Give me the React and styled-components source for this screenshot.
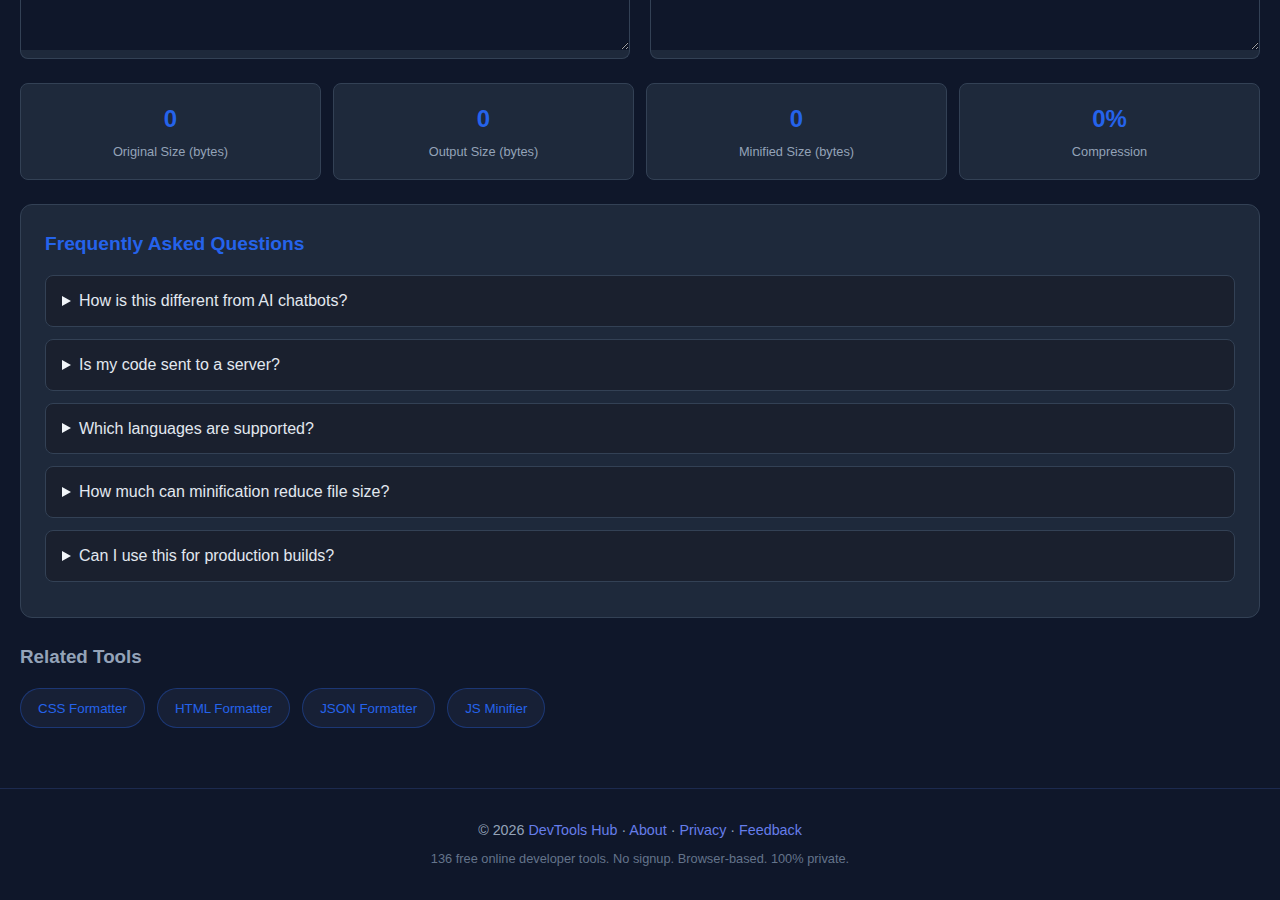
import React from "react";
import styled, { createGlobalStyle } from "styled-components";

const Global = createGlobalStyle`
  html, body { margin: 0; padding: 0; background: #0f172a; }
  body { font-family: "Liberation Sans", Arial, sans-serif; color: #e2e8f0; }
  * { box-sizing: border-box; }
`;

const Main = styled.main`
  padding: 0 20px;
`;

const EditorRow = styled.div`
  display: grid;
  grid-template-columns: 1fr 1fr;
  gap: 20px;
`;

const EditorPanel = styled.div`
  background: #1e293b;
  border: 1px solid #334155;
  border-top: none;
  border-radius: 0 0 8px 8px;
  overflow: hidden;
  padding-bottom: 8px;
`;

const CodeArea = styled.textarea`
  display: block;
  width: 100%;
  height: 50px;
  background: #0f172a;
  border: none;
  outline: none;
  color: #e2e8f0;
  resize: vertical;
  font-family: "Liberation Mono", monospace;
`;

const Stats = styled.div`
  display: grid;
  grid-template-columns: repeat(4, 1fr);
  gap: 12px;
  margin-top: 24px;
`;

const StatCard = styled.div`
  background: #1e293b;
  border: 1px solid #334155;
  border-radius: 8px;
  padding: 20px 12px 19px;
  text-align: center;
`;

const StatValue = styled.div`
  color: #2563eb;
  font-size: 24px;
  font-weight: 700;
  line-height: 29px;
`;

const StatLabel = styled.div`
  color: #94a3b8;
  font-size: 12.8px;
  line-height: 16px;
  margin-top: 11px;
`;

const FaqSection = styled.section`
  margin-top: 24px;
  background: #1e293b;
  border: 1px solid #334155;
  border-radius: 12px;
  padding: 26px 24px 23px;
`;

const FaqTitle = styled.h2`
  margin: 0 0 18px;
  color: #2563eb;
  font-size: 19.2px;
  line-height: 26px;
  font-weight: 700;
`;

const FaqItem = styled.details`
  background: #1a202e;
  border: 1px solid #334155;
  border-radius: 8px;
  margin-bottom: 12px;
`;

const FaqQuestion = styled.summary`
  padding: 16px;
  font-size: 16px;
  line-height: 17.75px;
  color: #e2e8f0;
  cursor: pointer;
  list-style: none;
  display: flex;
  align-items: center;
  gap: 8px;
  &::-webkit-details-marker { display: none; }
`;

const Marker = styled.span`
  width: 0;
  height: 0;
  border-top: 5px solid transparent;
  border-bottom: 5px solid transparent;
  border-left: 9px solid #f1f5f9;
`;

const RelatedTitle = styled.h3`
  margin: 28px 0 20px;
  color: #94a3b8;
  font-size: 18.8px;
  line-height: 22px;
  font-weight: 700;
`;

const Pills = styled.div`
  display: flex;
  flex-wrap: wrap;
  gap: 12px;
`;

const Pill = styled.a`
  display: inline-block;
  padding: 12px 17px 11px;
  border-radius: 999px;
  border: 1px solid rgba(37, 99, 235, 0.35);
  background: #172036;
  color: #2563eb;
  font-size: 13.33px;
  line-height: 15px;
  text-decoration: none;
`;

const Footer = styled.footer`
  margin-top: 60px;
  border-top: 1px solid #1c2a4f;
  padding: 33px 20px 30px;
  text-align: center;
`;

const FooterLine = styled.p`
  margin: 0;
  color: #94a3b8;
  font-size: 14.3px;
  line-height: 16px;
`;

const FooterLink = styled.a`
  color: #667eea;
  text-decoration: none;
`;

const FooterNote = styled.p`
  margin: 13px 0 0;
  color: #64748b;
  font-size: 12.8px;
  line-height: 15px;
`;

const stats = [
  { value: "0", label: "Original Size (bytes)" },
  { value: "0", label: "Output Size (bytes)" },
  { value: "0", label: "Minified Size (bytes)" },
  { value: "0%", label: "Compression" },
];

const faqs = [
  "How is this different from AI chatbots?",
  "Is my code sent to a server?",
  "Which languages are supported?",
  "How much can minification reduce file size?",
  "Can I use this for production builds?",
];

const tools = ["CSS Formatter", "HTML Formatter", "JSON Formatter", "JS Minifier"];

export default function App() {
  return (
    <>
      <Global />
      <Main>
        <EditorRow>
          <EditorPanel>
            <CodeArea spellCheck={false} />
          </EditorPanel>
          <EditorPanel>
            <CodeArea spellCheck={false} readOnly />
          </EditorPanel>
        </EditorRow>

        <Stats>
          {stats.map((s) => (
            <StatCard key={s.label}>
              <StatValue>{s.value}</StatValue>
              <StatLabel>{s.label}</StatLabel>
            </StatCard>
          ))}
        </Stats>

        <FaqSection>
          <FaqTitle>Frequently Asked Questions</FaqTitle>
          {faqs.map((q) => (
            <FaqItem key={q}>
              <FaqQuestion>
                <Marker />
                {q}
              </FaqQuestion>
            </FaqItem>
          ))}
        </FaqSection>

        <RelatedTitle>Related Tools</RelatedTitle>
        <Pills>
          {tools.map((t) => (
            <Pill key={t} href="#">{t}</Pill>
          ))}
        </Pills>
      </Main>
      <Footer>
        <FooterLine>
          © 2026 <FooterLink href="#">DevTools Hub</FooterLink> · <FooterLink href="#">About</FooterLink> ·{" "}
          <FooterLink href="#">Privacy</FooterLink> · <FooterLink href="#">Feedback</FooterLink>
        </FooterLine>
        <FooterNote>136 free online developer tools. No signup. Browser-based. 100% private.</FooterNote>
      </Footer>
    </>
  );
}
